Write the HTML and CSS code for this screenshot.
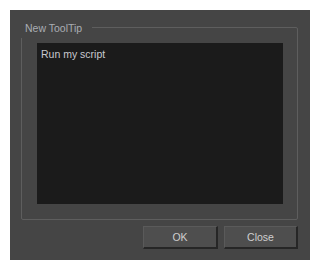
FILE: index.html
```html
<!DOCTYPE html>
<html>
<head>
<meta charset="utf-8">
<link rel="stylesheet" href="styles.css">
</head>
<body>
<div class="dialog">
  <div class="group">
    <span class="group-title">New ToolTip</span>
    <div class="editor">Run my script</div>
  </div>
  <div class="buttons">
    <button class="btn btn-ok">OK</button>
    <button class="btn btn-close">Close</button>
  </div>
</div>
</body>
</html>
```
FILE: styles.css
```css
html, body {
  margin: 0;
  padding: 0;
  background: #ffffff;
}
body {
  font-family: "Liberation Sans", Arial, sans-serif;
}
.dialog {
  margin: 10px;
  width: 300px;
  height: 250px;
  box-sizing: border-box;
  background: #454545;
  padding: 17px 12px 0 11px;
  display: flex;
  flex-direction: column;
}
.group {
  position: relative;
  height: 193px;
  box-sizing: border-box;
  border: 1px solid #5e5e5e;
  border-radius: 2px;
  padding: 15px 14px 15px 15px;
  display: flex;
}
.group-title {
  position: absolute;
  left: -2px;
  top: -6px;
  padding: 0 10px 4px 5px;
  background: #454545;
  color: #a9adb3;
  font-size: 10.5px;
  line-height: 12px;
}
.editor {
  flex: 1;
  background: #1b1b1b;
  color: #c9c9cf;
  font-size: 10.5px;
  line-height: 13px;
  padding: 5px 4px 3px 4px;
}
.buttons {
  display: flex;
  justify-content: flex-end;
  gap: 6px;
  margin-top: 6px;
}
.btn {
  height: 23px;
  box-sizing: border-box;
  background: #4e4e4e;
  border: 1px solid #5a5a5a;
  border-right: 2px solid #262626;
  border-bottom: 2px solid #262626;
  color: #cfcfcf;
  font-family: "Liberation Sans", Arial, sans-serif;
  font-size: 10.5px;
  padding: 0;
}
.btn-ok { width: 75px; }
.btn-close { width: 74px; }
```
